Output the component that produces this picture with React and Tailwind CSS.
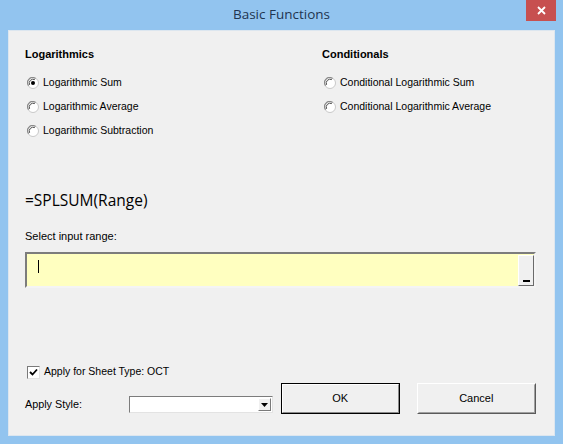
import React, { useState } from 'react';

const ui = { fontFamily: '"Liberation Sans", Tahoma, Arial, sans-serif' };
const segoe = { fontFamily: '"Open Sans", "Segoe UI", sans-serif' };

// Radio clásico de Windows dibujado en svg
const Radio = ({ checked }) => (
  <svg width="12" height="12" viewBox="0 0 12 12" className="shrink-0">
    <circle cx="6" cy="6" r="5.5" fill="#ffffff" stroke="#c8c8c8" strokeWidth="1" />
    <path d="M1.6 8.6 A5 5 0 0 1 8.6 1.6" stroke="#8a8a8a" strokeWidth="1.2" fill="none" />
    <path d="M2.6 7.8 A3.9 3.9 0 0 1 7.8 2.6" stroke="#4a4a4a" strokeWidth="1" fill="none" />
    {checked && <circle cx="6" cy="6" r="2" fill="#000000" />}
  </svg>
);

const RadioRow = ({ label, checked, onClick }) => (
  <div className="h-[24px] flex items-center gap-[4px] pl-[2px] cursor-default" onClick={onClick}>
    <Radio checked={checked} />
    <span className="text-[10.5px] text-black">{label}</span>
  </div>
);

const Check = () => (
  <div className="w-[13px] h-[13px] bg-white border border-t-[#7a7a7a] border-l-[#7a7a7a] border-b-[#e3e3e3] border-r-[#e3e3e3] flex items-center justify-center">
    <svg width="9" height="9" viewBox="0 0 9 9">
      <path d="M1 4 L3.5 6.5 L8 1.5" stroke="#000" strokeWidth="1.8" fill="none" />
    </svg>
  </div>
);

export default function App() {
  const [opcion, setOpcion] = useState('sum');

  return (
    <div className="w-[563px] h-[444px] bg-[#92c4ef] flex flex-col overflow-hidden" style={ui}>
      {/* Barra de título */}
      <div className="h-[30px] relative flex items-center justify-center shrink-0">
        <span className="text-[13.5px] text-[#1f3550] -mt-[2px]" style={segoe}>Basic Functions</span>
        <div className="absolute right-[7px] top-0 w-[30px] h-[21px] bg-[#c75050] flex items-center justify-center">
          <svg width="9" height="9" viewBox="0 0 9 9">
            <path d="M1 1 L8 8 M8 1 L1 8" stroke="#ffffff" strokeWidth="1.8" />
          </svg>
        </div>
      </div>

      {/* Contenido */}
      <div className="flex-1 mx-[8px] mb-[8px] bg-[#f0f0f0] border border-[#dce6ef] flex flex-col pl-[16px] pr-[18px] pt-[16px]">
        <div className="flex">
          <div className="w-[297px]">
            <div className="h-[14px] flex items-center text-[11px] font-bold text-black">Logarithmics</div>
            <div className="mt-[10px]">
              <RadioRow label="Logarithmic Sum" checked={opcion === 'sum'} onClick={() => setOpcion('sum')} />
              <RadioRow label="Logarithmic Average" checked={opcion === 'avg'} onClick={() => setOpcion('avg')} />
              <RadioRow label="Logarithmic Subtraction" checked={opcion === 'sub'} onClick={() => setOpcion('sub')} />
            </div>
          </div>
          <div>
            <div className="h-[14px] flex items-center text-[11px] font-bold text-black">Conditionals</div>
            <div className="mt-[10px]">
              <RadioRow label="Conditional Logarithmic Sum" checked={opcion === 'csum'} onClick={() => setOpcion('csum')} />
              <RadioRow label="Conditional Logarithmic Average" checked={opcion === 'cavg'} onClick={() => setOpcion('cavg')} />
            </div>
          </div>
        </div>

        <div className="mt-[48px] h-[20px] flex items-center text-[15.5px] text-black" style={segoe}>=SPLSUM(Range)</div>
        <div className="mt-[18px] h-[14px] flex items-center text-[11px] text-black">Select input range:</div>

        {/* Campo de rango */}
        <div className="mt-[9px] w-[511px] h-[36px] bg-[#ffffc0] border-2 border-t-[#7c7c7c] border-l-[#7c7c7c] border-b-[#f4f4f4] border-r-[#f4f4f4] flex items-stretch">
          <div className="flex-1 relative">
            <div className="absolute left-[11px] top-[6px] w-px h-[13px] bg-black" />
          </div>
          <div className="w-[16px] mt-[1px] bg-[#f0f0f0] border border-t-[#ffffff] border-l-[#ffffff] border-b-[#6a6a6a] border-r-[#6a6a6a] flex items-end justify-center pb-[3px]">
            <div className="w-[7px] h-[2px] bg-black" />
          </div>
        </div>

        <div className="mt-[76px] h-[16px] flex items-center gap-[4px] pl-[2px]">
          <Check />
          <span className="text-[10.5px] text-black">Apply for Sheet Type: OCT</span>
        </div>

        <div className="mt-[3px] h-[31px] flex items-end">
          <div className="flex items-center mb-[1px]">
            <span className="w-[104px] text-[10.8px] text-black">Apply Style:</span>
            <div className="w-[144px] h-[17px] bg-white border border-t-[#7c7c7c] border-l-[#7c7c7c] border-b-[#e3e3e3] border-r-[#e3e3e3] flex justify-end p-[1px]">
              <div className="w-[13px] bg-[#f0f0f0] border border-t-[#ffffff] border-l-[#ffffff] border-b-[#7a7a7a] border-r-[#7a7a7a] flex items-center justify-center">
                <svg width="7" height="4" viewBox="0 0 7 4">
                  <path d="M0 0 H7 L3.5 4 Z" fill="#000" />
                </svg>
              </div>
            </div>
          </div>
          <button className="ml-[8px] w-[119px] h-[31px] bg-[#f0f0f0] border border-black flex items-center justify-center text-[11px] text-black" style={ui}>
            <span className="w-full h-full flex items-center justify-center border border-t-[#ffffff] border-l-[#ffffff] border-b-[#8a8a8a] border-r-[#8a8a8a]">OK</span>
          </button>
          <button className="ml-[17px] w-[120px] h-[31px] bg-[#f0f0f0] border border-t-[#ffffff] border-l-[#ffffff] border-b-[#5a5a5a] border-r-[#5a5a5a] flex items-center justify-center text-[11px] text-black" style={ui}>
            <span className="w-full h-full flex items-center justify-center border border-t-[#f0f0f0] border-l-[#f0f0f0] border-b-[#a0a0a0] border-r-[#a0a0a0]">Cancel</span>
          </button>
        </div>
      </div>
    </div>
  );
}
